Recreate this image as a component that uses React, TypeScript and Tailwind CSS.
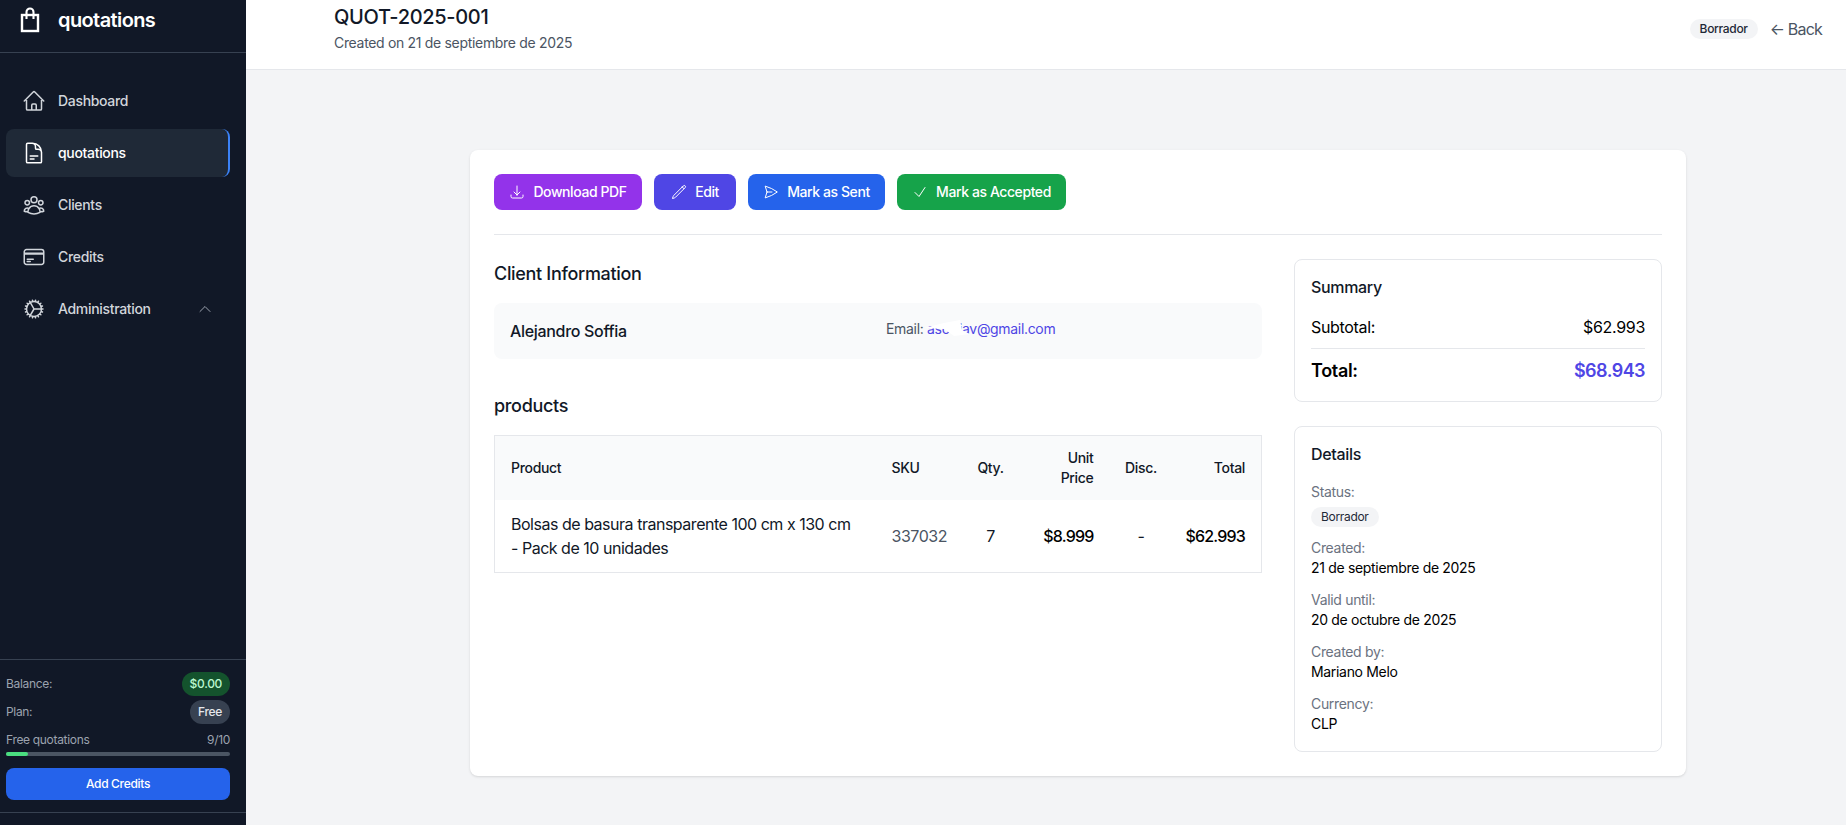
import {
  HiOutlineHome,
  HiOutlineDocumentText,
  HiOutlineUserGroup,
  HiOutlineCreditCard,
  HiOutlineCog,
  HiOutlineChevronUp,
  HiOutlineArrowDownTray,
  HiOutlinePencil,
  HiOutlinePaperAirplane,
  HiOutlineCheck,
} from "react-icons/hi2";

const navItems = [
  { label: "Dashboard", icon: HiOutlineHome },
  { label: "quotations", icon: HiOutlineDocumentText, active: true },
  { label: "Clients", icon: HiOutlineUserGroup },
  { label: "Credits", icon: HiOutlineCreditCard },
];

const actions = [
  { label: "Download PDF", icon: HiOutlineArrowDownTray, className: "bg-[#9333ea] w-[148px]" },
  { label: "Edit", icon: HiOutlinePencil, className: "bg-[#4f46e5] w-[82px]" },
  { label: "Mark as Sent", icon: HiOutlinePaperAirplane, className: "bg-[#2563eb] w-[137px]" },
  { label: "Mark as Accepted", icon: HiOutlineCheck, className: "bg-[#16a34a] w-[169px]" },
];

const details = [
  { label: "Created:", value: "21 de septiembre de 2025" },
  { label: "Valid until:", value: "20 de octubre de 2025" },
  { label: "Created by:", value: "Mariano Melo" },
  { label: "Currency:", value: "CLP" },
];

function BagLogo() {
  return (
    <svg viewBox="0 0 20 26" className="w-5 h-[26px] shrink-0 mt-[2px]" fill="none" stroke="currentColor">
      <rect x="2" y="8" width="16" height="16" strokeWidth="2.4" />
      <path d="M6.5 12V5a3.5 3.5 0 0 1 7 0v7" strokeWidth="2.1" />
    </svg>
  );
}

function Sidebar() {
  return (
    <aside className="w-[246px] h-[825px] shrink-0 bg-[#111827] flex flex-col">
      <div className="h-[53px] border-b border-[#374151] flex items-start pl-[20px] gap-[18px] pt-[5px] text-white">
        <BagLogo />
        <span className="text-[20px] leading-[30px] font-semibold tracking-[-0.03em]">quotations</span>
      </div>
      <nav className="flex flex-col gap-1 pl-[6px] pr-4 pt-6 flex-1">
        {navItems.map((item) => (
          <div
            key={item.label}
            className={
              item.active
                ? "h-12 rounded-lg bg-[#1f2937] border-r-2 border-[#3b82f6] flex items-center gap-3 pl-[16px] text-white font-medium text-[14px]"
                : "h-12 rounded-lg flex items-center gap-3 pl-[16px] text-[#d1d5db] text-[14px] font-medium"
            }
          >
            <item.icon className="w-6 h-6 shrink-0" />
            <span className="-mt-px">{item.label}</span>
          </div>
        ))}
        <div className="h-12 rounded-lg flex items-center gap-3 pl-[16px] text-[#d1d5db] text-[14px] font-medium">
          <HiOutlineCog className="w-6 h-6 shrink-0" />
          <span className="flex-1 -mt-px">Administration</span>
          <HiOutlineChevronUp className="w-4 h-4 mr-[17px] text-[#9ca3af]" />
        </div>
      </nav>
      <div className="border-t border-[#374151] pl-[6px] pr-4 pt-3 h-[166px] text-[12px] text-[#9ca3af]">
        <div className="flex items-center justify-between h-6">
          <span>Balance:</span>
          <span className="rounded-full bg-[#14532d] text-[#bbf7d0] px-2 h-6 leading-6 font-medium">$0.00</span>
        </div>
        <div className="flex items-center justify-between h-6 mt-1">
          <span>Plan:</span>
          <span className="rounded-full bg-[#374151] text-[#e5e7eb] px-2 h-6 leading-6 font-medium">Free</span>
        </div>
        <div className="flex items-center justify-between h-4 mt-2">
          <span>Free quotations</span>
          <span>9/10</span>
        </div>
        <div className="mt-[4px] h-1 rounded-full bg-[#4b5563]">
          <div className="h-1 rounded-full bg-[#4ade80] w-[10%]" />
        </div>
        <button className="mt-3 w-full h-8 rounded-lg bg-[#2563eb] text-white font-medium">Add Credits</button>
        <div className="mt-3 border-t border-[#374151] -ml-[6px] -mr-4" />
      </div>
    </aside>
  );
}

function Header() {
  return (
    <header className="h-[70px] bg-white border-b border-[#e5e7eb] flex items-start justify-between pl-[88px] pr-[24px]">
      <div className="pt-[3px]">
        <h1 className="text-[20px] leading-7 font-medium text-[#111827]">QUOT-2025-001</h1>
        <p className="mt-[2px] text-[14px] leading-5 text-[#4b5563]">Created on 21 de septiembre de 2025</p>
      </div>
      <div className="flex items-center gap-3 mt-[17px]">
        <span className="rounded-full bg-[#f3f4f6] text-[#1f2937] text-[12px] font-medium h-5 leading-5 px-[10px]">Borrador</span>
        <span className="text-[16px] leading-6 text-[#4b5563] tracking-[-0.05em]">← Back</span>
      </div>
    </header>
  );
}

function ProductsTable() {
  return (
    <table className="w-full table-fixed border border-[#e5e7eb] border-collapse text-[#111827]">
      <colgroup>
        <col className="w-[381px]" />
        <col className="w-[85px]" />
        <col className="w-[60px]" />
        <col className="w-[89px]" />
        <col className="w-[63px]" />
        <col />
      </colgroup>
      <thead className="bg-[#f9fafb] text-[14px] leading-5 font-medium">
        <tr>
          <th className="py-3 pl-4 pr-4 text-left font-medium">Product</th>
          <th className="py-3 pl-4 pr-0 text-left font-medium">SKU</th>
          <th className="py-3 px-0 text-center font-medium">Qty.</th>
          <th className="py-3 pl-4 pr-4 text-right font-medium">Unit Price</th>
          <th className="py-3 px-0 text-center font-medium">Disc.</th>
          <th className="py-3 pl-4 pr-4 text-right font-medium">Total</th>
        </tr>
      </thead>
      <tbody className="text-[16px] leading-6">
        <tr>
          <td className="py-3 pl-4 pr-4 tracking-[-0.03em]">Bolsas de basura transparente 100 cm x 130 cm - Pack de 10 unidades</td>
          <td className="py-3 pl-4 pr-0 text-[#4b5563] tracking-[-0.03em]">337032</td>
          <td className="py-3 text-center">7</td>
          <td className="py-3 pl-2 pr-4 text-right font-medium tracking-[-0.05em] text-black">$8.999</td>
          <td className="py-3 text-center">-</td>
          <td className="py-3 pl-2 pr-4 text-right font-medium tracking-[-0.05em] text-black">$62.993</td>
        </tr>
      </tbody>
    </table>
  );
}

function SidePanels() {
  return (
    <div className="flex flex-col gap-6">
      <section className="rounded-lg border border-[#e5e7eb] p-4 h-[143px]">
        <h3 className="-mt-px text-[16px] leading-6 font-medium text-[#111827]">Summary</h3>
        <div className="mt-[16px] flex justify-between text-[16px] leading-6 text-black">
          <span>Subtotal:</span>
          <span>$62.993</span>
        </div>
        <div className="mt-[9px] border-t border-[#e5e7eb] pt-[8px] flex justify-between text-[18px] leading-7">
          <span className="font-semibold text-black">Total:</span>
          <span className="font-semibold text-[#4f46e5] tracking-[-0.03em]">$68.943</span>
        </div>
      </section>
      <section className="rounded-lg border border-[#e5e7eb] p-4 pb-[17px]">
        <h3 className="-mt-px text-[16px] leading-6 font-medium text-[#111827]">Details</h3>
        <div className="mt-[16px] text-[14px] leading-5 text-[#6b7280]">Status:</div>
        <span className="mt-[5px] inline-block rounded-full bg-[#f3f4f6] text-[#1f2937] text-[12px] h-5 leading-5 px-[10px]">Borrador</span>
        <div className="mt-[11px] flex flex-col gap-3">
          {details.map((row) => (
            <div key={row.label} className="text-[14px] leading-5">
              <div className="text-[#6b7280]">{row.label}</div>
              <div className="text-black">{row.value}</div>
            </div>
          ))}
        </div>
      </section>
    </div>
  );
}

export default function App() {
  return (
    <div className="flex w-[1846px] h-[825px] overflow-hidden bg-[#f3f4f6] font-['Inter','Noto_Sans',sans-serif] tracking-[-0.02em]">
      <Sidebar />
      <div className="flex-1 flex flex-col">
        <Header />
        <main className="pt-[80px] pl-[224px] pr-[160px]">
          <div className="rounded-lg bg-white shadow-sm p-6">
            <div className="flex gap-3 pb-6 border-b border-[#e5e7eb]">
              {actions.map((action) => (
                <button
                  key={action.label}
                  className={`${action.className} h-9 rounded-lg text-white text-[14px] font-medium flex items-center justify-center gap-2 tracking-[-0.03em]`}
                >
                  <action.icon className="w-4 h-4" />
                  <span className="-mt-px">{action.label}</span>
                </button>
              ))}
            </div>
            <div className="mt-6 grid grid-cols-3 gap-8">
              <div className="col-span-2">
                <h2 className="mt-px text-[18px] leading-7 font-medium text-[#111827]">Client Information</h2>
                <div className="mt-[15px] h-14 rounded-lg bg-[#f9fafb] flex pl-4">
                  <div className="w-[376px] pt-4 text-[16px] leading-6 font-medium text-[#111827]">Alejandro Soffia</div>
                  <div className="relative pt-[16px] text-[14px] leading-5 text-[#4b5563]">
                    Email: <span className="text-[#4f46e5]">asoffiav@gmail.com</span>
                    <svg viewBox="0 0 48 18" className="absolute left-[38px] top-[17px] w-12 h-[18px]">
                      <path d="M0 8L20 3L36 0L38 10L46 14L30 16L20 9Z" fill="#ffffff" />
                    </svg>
                  </div>
                </div>
                <h2 className="mt-[33px] text-[18px] leading-7 font-medium text-[#111827]">products</h2>
                <div className="mt-[15px]">
                  <ProductsTable />
                </div>
              </div>
              <SidePanels />
            </div>
          </div>
        </main>
      </div>
    </div>
  );
}
